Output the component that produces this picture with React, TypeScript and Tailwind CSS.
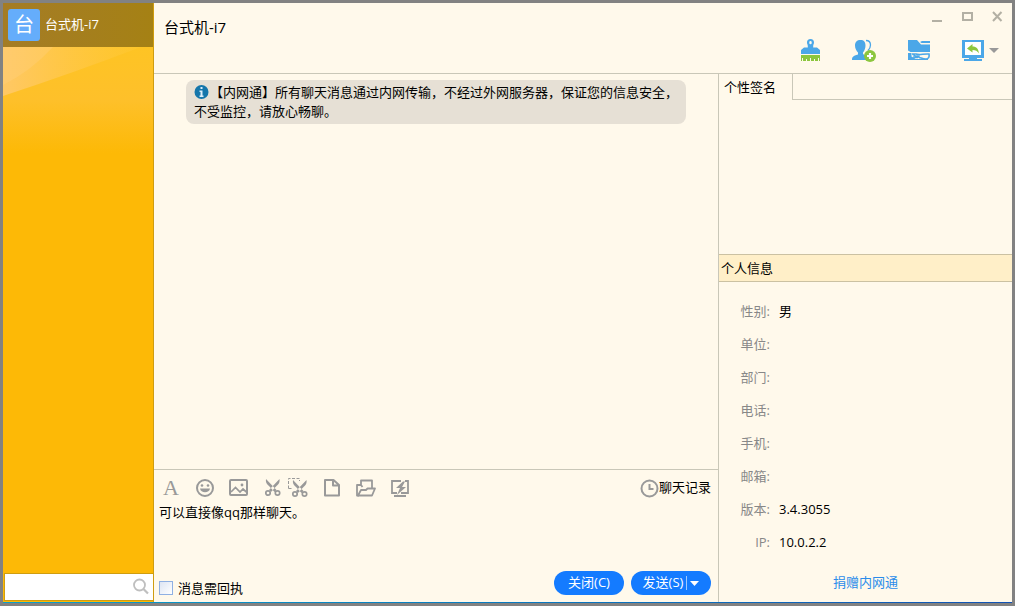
import React from 'react';

interface InfoRow {
  label: string;
  value: string;
}

interface Tool {
  name: string;
  icon: React.ReactNode;
}

const infoRows: InfoRow[] = [
  { label: '性别:', value: '男' },
  { label: '单位:', value: '' },
  { label: '部门:', value: '' },
  { label: '电话:', value: '' },
  { label: '手机:', value: '' },
  { label: '邮箱:', value: '' },
  { label: '版本:', value: '3.4.3055' },
  { label: 'IP:', value: '10.0.2.2' },
];

const headerTools: Tool[] = [
  {
    name: '清屏',
    icon: (
      <svg viewBox="0 0 19 23" className="w-[19px] h-[23px]">
        <path fillRule="evenodd" fill="#4ba7e8" d="M9.5 0C11.800 0 13 1.500 13 3.500c0 1.500-.8 2-.8 3.500v1.500h3.800L19 11v4H0v-4l3-2.500h3.800V7C6.800 5.500 6 5 6 3.500 6 1.500 7.200 0 9.500 0zM9.500 2a1.200 1.200 0 0 0-1.200 1.200v.8a1.200 1.200 0 0 0 2.400 0v-.8A1.200 1.200 0 0 0 9.500 2z" />
        <path fill="#8cc63e" d="M0 16h19v6h-1v-3h-1v3h-3v-2h-1v2h-3v-3H9v3H6v-2H5v2H2v-3H1v3H0z" />
      </svg>
    ),
  },
  {
    name: '添加成员',
    icon: (
      <svg viewBox="0 0 24 23" className="w-6 h-[23px]">
        <path fill="#4ba7e8" d="M8.500 1C12 1 13.500 3 13.500 6.500c0 3-1.200 5.500-2.500 7v1.500l3 2v4H0c0-3 1-4 6-5.500v-2c-1.500-1.500-3-4-3-7C3 3 5 1 8.500 1z" />
        <path fill="none" stroke="#4ba7e8" strokeWidth="1.300" d="M14 1.500c3.500 0 4.500 2 4.500 4.500 0 2.500-1 4-2.500 5.500" />
        <circle cx="18" cy="17" r="6" fill="#8cc63e" />
        <path stroke="#fff" strokeWidth="2.200" d="M15 17h6M18 14v6" />
      </svg>
    ),
  },
  {
    name: '共享文件',
    icon: (
      <svg viewBox="0 0 22 23" className="w-[22px] h-[23px]">
        <path fill="#4ba7e8" d="M0 1h9l4 4.500h9V13H2.500L0 11.500z" />
        <path fill="#4ba7e8" d="M12 3l2-1h8v2h-8.500z" />
        <path fill="none" stroke="#4ba7e8" strokeWidth="1.600" d="M4 15h4c4 1.500 7-.5 13 0 .5 3-.5 5-3 5-4 0-5-1.500-7-1.500M5 15.500c1.500 1.500 3 2 6 1.800 0 1.200-2 1.500-6 .7" />
        <path fill="#4ba7e8" d="M0 14h3.500v3.500L8 20h12v1H0z" />
      </svg>
    ),
  },
];

const editTools: Tool[] = [
  {
    name: '表情',
    icon: (
      <svg viewBox="0 0 20 20" className="w-5 h-5" fill="none" stroke="#999" strokeWidth="2">
        <circle cx="10" cy="10" r="8" />
        <circle cx="7" cy="7.500" r="1.300" fill="#999" stroke="none" />
        <circle cx="13" cy="7.500" r="1.300" fill="#999" stroke="none" />
        <path d="M5 10.500h10c-.5 5-9.500 5-10 0z" fill="#999" stroke="none" />
      </svg>
    ),
  },
  {
    name: '图片',
    icon: (
      <svg viewBox="0 0 20 20" className="w-5 h-5" fill="none" stroke="#999" strokeWidth="2">
        <rect x="1" y="2" width="17" height="15" rx="1" />
        <path d="M2 14l4.500-4.500 4.500 4.500 3-3 4 3.500" strokeWidth="1.700" />
        <circle cx="13" cy="7" r="1.400" fill="#999" stroke="none" />
      </svg>
    ),
  },
];

const captureTools: Tool[] = [
  {
    name: '截图',
    icon: (
      <svg viewBox="0 0 20 20" className="w-5 h-5" fill="none" stroke="#999">
        <path fill="#999" stroke="none" d="M3 1c-.6 3 .6 5 3 7l5.500 6 2-2zM16.500 1c.6 3-.6 5-3 7L8 14l-2-2z" />
        <circle cx="5" cy="15" r="2.200" strokeWidth="1.700" />
        <circle cx="14.500" cy="15" r="2.200" strokeWidth="1.700" />
      </svg>
    ),
  },
  {
    name: '隐藏窗口截图',
    icon: (
      <svg viewBox="0 0 20 20" className="w-5 h-5" fill="none" stroke="#999">
        <path d="M.5 10.500V.5h11V3M.5 10.500H4" strokeDasharray="3 1.500" />
        <path fill="#999" stroke="none" d="M5 2c-.6 3 .6 5 3 7l5.500 6 2-2zM18.500 2c.6 3-.6 5-3 7L10 15l-2-2z" />
        <circle cx="7" cy="16" r="2.200" strokeWidth="1.700" />
        <circle cx="16.500" cy="16" r="2.200" strokeWidth="1.700" />
      </svg>
    ),
  },
];

const sendTools: Tool[] = [
  {
    name: '发送文件',
    icon: (
      <svg viewBox="0 0 20 20" className="w-5 h-5" fill="none" stroke="#999" strokeWidth="2">
        <path d="M3 2h8.500L17 7v10.500H3zM11 2v5.500h6" strokeLinejoin="round" />
      </svg>
    ),
  },
  {
    name: '发送文件夹',
    icon: (
      <svg viewBox="0 0 20 20" className="w-5 h-5" fill="none" stroke="#999" strokeWidth="1.800" strokeLinejoin="round">
        <path d="M3 17.500H1V7h4l1.500 2M5 7V2.500h11v8" />
        <path d="M2 17.500L5 12h5l1.500-1.500h7.500l-3 7z" />
      </svg>
    ),
  },
  {
    name: '屏幕震动',
    icon: (
      <svg viewBox="0 0 20 20" className="w-5 h-5" fill="none" stroke="#999" strokeWidth="1.800">
        <path d="M11 3H2v12h5M15 3h3v12h-7M4 18h12" />
        <path fill="#999" stroke="none" d="M13 3.500L6 10h4l-3 7 9-8h-4l3-5.500z" />
      </svg>
    ),
  },
];

function ToolButton({ tool }: { tool: Tool }) {
  return <button aria-label={tool.name}>{tool.icon}</button>;
}

function Sidebar() {
  return (
    <aside className="w-[151px] shrink-0 flex flex-col bg-[#fdb906] border-r border-[#cf9d10]">
      <div className="h-11 shrink-0 flex items-center gap-[5px] pl-[5px] bg-linear-to-r from-[#a47c25] to-[#a58114] text-white">
        <div className="size-8 rounded-[3px] bg-[#65adfb] flex items-center justify-center text-xl leading-none">台</div>
        <span className="text-[13px]">台式机-i7</span>
      </div>
      <svg viewBox="0 0 150 106" preserveAspectRatio="none" className="block w-full h-[106px]">
        <defs>
          <linearGradient id="glow" x1="0" y1="0" x2="0" y2="1">
            <stop offset="0" stopColor="#fec424" />
            <stop offset="0.500" stopColor="#fec02a" />
            <stop offset="1" stopColor="#fdb906" />
          </linearGradient>
          <linearGradient id="ray" x1="0" y1="0" x2="1" y2="0">
            <stop offset="0" stopColor="#ffc865" />
            <stop offset="1" stopColor="#ffc830" stopOpacity="0.500" />
          </linearGradient>
        </defs>
        <rect width="150" height="106" fill="url(#glow)" />
        <path d="M0 0h138Q70 26 0 49z" fill="url(#ray)" />
        <path d="M0 0h50Q28 24 0 38z" fill="#ffd080" fillOpacity="0.350" />
      </svg>
      <label className="mt-auto mb-px ml-px h-7 flex items-center bg-white border border-[#cf9d10] border-r-0">
        <input type="text" aria-label="搜索" className="min-w-0 flex-1 h-full px-1 text-[13px] outline-none" />
        <svg viewBox="0 0 18 18" className="w-[18px] h-[18px] mr-[3px]" fill="none" stroke="#bfbfbf" strokeWidth="1.800">
          <circle cx="7.500" cy="7" r="5.500" />
          <path d="M11.500 11l4.500 4.500" strokeWidth="2.200" />
        </svg>
      </label>
    </aside>
  );
}

function Header() {
  return (
    <header className="h-[71px] shrink-0 flex justify-between border-b border-[#c9c7b8]">
      <h1 className="pt-3.5 pl-2.5 text-[15px] leading-5">台式机-i7</h1>
      <div className="flex flex-col items-end">
        <div className="h-7 flex items-start gap-[19px] pt-2 pr-[9px]">
          <button aria-label="最小化">
            <svg viewBox="0 0 11 11" className="block w-[11px] h-[11px]"><path fill="#b3b0a4" d="M0 9h10v2H0z" /></svg>
          </button>
          <button aria-label="最大化">
            <svg viewBox="0 0 11 11" className="block w-[11px] h-[11px]"><path fill="none" stroke="#b3b0a4" strokeWidth="2" d="M1 2h9v7H1z" /></svg>
          </button>
          <button aria-label="关闭">
            <svg viewBox="0 0 11 11" className="block w-[11px] h-[11px]"><path stroke="#b3b0a4" strokeWidth="2" d="M1 1l8.500 9M9.500 1L1 10" /></svg>
          </button>
        </div>
        <div className="flex gap-8 pt-2 pr-[13px]">
          {headerTools.map((tool) => (
            <ToolButton key={tool.name} tool={tool} />
          ))}
          <button aria-label="远程协助" className="flex items-center gap-[5px]">
            <svg viewBox="0 0 22 23" className="w-[22px] h-[23px]">
              <path fill="#4ba7e8" d="M0 1h22v18h-7v1h5v2H2v-2h5v-1H0z" />
              <path fill="#fff" d="M3 3h16v13H3z" />
              <path fill="#8cc63e" d="M5 9.500L10.500 5v2.500c4 0 6 2.500 6.500 7-1.500-2.500-3.500-3.500-6.500-3.500v2.500z" />
            </svg>
            <svg viewBox="0 0 10 5" className="w-2.5 h-[5px]"><path fill="#999" d="M0 0h10L5 5z" /></svg>
          </button>
        </div>
      </div>
    </header>
  );
}

function Chat() {
  return (
    <main className="flex-1 min-w-0 flex flex-col">
      <section className="flex-1 pt-1.5 px-8">
        <p className="max-w-[500px] rounded-lg bg-[#e6e0d5] py-[3px] pl-2 pr-1.5 text-[13px] leading-[19px]">
          <svg viewBox="0 0 16 14" className="inline-block w-4 h-3.5 align-[-2px]">
            <circle cx="7.500" cy="7" r="7" fill="#1576ab" />
            <path fill="#dceefa" d="M6.500 2h2v2h-2zM5.500 5.500h3v5h1V12h-4v-1.500h1V7h-1z" />
          </svg>
          【内网通】所有聊天消息通过内网传输，不经过外网服务器，保证您的信息安全，不受监控，请放心畅聊。
        </p>
      </section>

      <section className="h-[133px] shrink-0 flex flex-col border-t border-[#c9c7b8]">
        <div className="h-8 shrink-0 pt-1 px-[7px] flex items-center justify-between">
          <div className="flex items-center gap-3.5">
            <button aria-label="字体" className="w-5 h-5 font-['Liberation_Serif',serif] text-[22px] leading-5 text-[#999]">A</button>
            {editTools.map((tool) => (
              <ToolButton key={tool.name} tool={tool} />
            ))}
            <div className="flex gap-[5px]">
              {captureTools.map((tool) => (
                <ToolButton key={tool.name} tool={tool} />
              ))}
            </div>
            {sendTools.map((tool) => (
              <ToolButton key={tool.name} tool={tool} />
            ))}
          </div>
          <button className="flex items-center text-[13px]">
            <svg viewBox="0 0 19 19" className="w-[19px] h-[19px]" fill="none" stroke="#999" strokeWidth="2">
              <circle cx="9.500" cy="9.500" r="8" />
              <path d="M9.500 5v5h4" />
            </svg>
            聊天记录
          </button>
        </div>
        <textarea
          aria-label="消息"
          defaultValue="可以直接像qq那样聊天。"
          className="flex-1 min-h-0 resize-none px-[5px] text-[13px] leading-5 outline-none"
        />
        <div className="h-[31px] shrink-0 pl-[5px] pr-[7px] flex items-start justify-between">
          <label className="pt-2 flex items-center gap-[5px] text-[13px] leading-[18px]">
            <input type="checkbox" className="size-3.5 appearance-none border border-[#8fb0e3] bg-linear-to-br from-[#dde5f3] to-white" />
            消息需回执
          </label>
          <div className="flex gap-[7px] text-[13px] text-white">
            <button className="w-[70px] h-6 rounded-full bg-[#147bff]">关闭(C)</button>
            <button className="w-20 h-6 rounded-full bg-[#147bff] flex items-center justify-center gap-[3px]">
              发送(S)
              <span className="w-px h-3.5 bg-[#a1caff]" />
              <svg viewBox="0 0 9 5" className="w-[9px] h-[5px]"><path fill="#fff" d="M0 0h9L4.500 5z" /></svg>
            </button>
          </div>
        </div>
      </section>
    </main>
  );
}

function ProfilePanel() {
  return (
    <aside className="w-[294px] shrink-0 flex flex-col border-l border-[#c9c7b8] text-[13px]">
      <div className="h-[26px] flex">
        <h2 className="w-[73px] pl-[5px] leading-[26px]">个性签名</h2>
        <div className="flex-1 border-l border-b border-[#c9c7b8]" />
      </div>
      <div className="h-[154px]" />
      <h2 className="h-7 pl-0.5 leading-[26px] bg-[#ffefc8] border-y border-[#cbc1a2]">个人信息</h2>
      <dl className="pt-[13px]">
        {infoRows.map((row) => (
          <div key={row.label} className="h-[33px] flex items-center gap-[9px]">
            <dt className="w-[51px] text-right text-[#888]">{row.label}</dt>
            <dd>{row.value}</dd>
          </div>
        ))}
      </dl>
      <a href="#donate" className="mt-auto mb-2.5 self-center leading-5 text-[#2b8cea]">捐赠内网通</a>
    </aside>
  );
}

export default function App() {
  return (
    <div className="h-screen min-h-[560px] flex flex-col border-3 border-[#828282] bg-[#fff9eb] text-black font-['Open_Sans','Noto_Sans_CJK_SC',sans-serif]">
      <div className="flex-1 min-h-0 flex">
        <Sidebar />
        <div className="flex-1 min-w-0 flex flex-col">
          <Header />
          <div className="flex-1 min-h-0 flex">
            <Chat />
            <ProfilePanel />
          </div>
        </div>
      </div>
      <div className="h-px shrink-0 bg-linear-to-r from-[#0e9fc9] to-[#1253b5]" />
    </div>
  );
}
